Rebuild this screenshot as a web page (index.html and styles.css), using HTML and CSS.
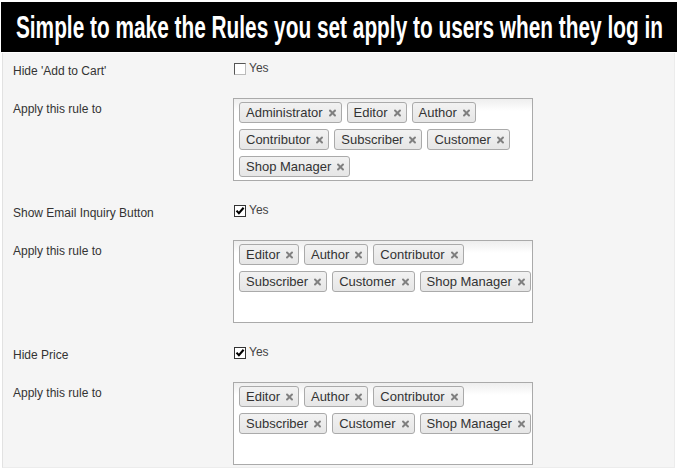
FILE: index.html
```html
<!DOCTYPE html>
<html>
<head>
<meta charset="utf-8">
<link rel="stylesheet" href="styles.css">
</head>
<body>
<header class="banner"><h1><span>Simple to make the Rules you set apply to users when they log in</span></h1></header>
<main class="panel">
  <section class="rule">
    <div class="label">Hide 'Add to Cart'</div>
    <label class="check"><span class="cb"></span>Yes</label>
    <div class="label apply">Apply this rule to</div>
    <div class="chooser">
      <div class="tag-row">
        <span class="tag">Administrator<i class="x"></i></span>
        <span class="tag">Editor<i class="x"></i></span>
        <span class="tag">Author<i class="x"></i></span>
      </div>
      <div class="tag-row">
        <span class="tag">Contributor<i class="x"></i></span>
        <span class="tag">Subscriber<i class="x"></i></span>
        <span class="tag">Customer<i class="x"></i></span>
      </div>
      <div class="tag-row">
        <span class="tag">Shop Manager<i class="x"></i></span>
      </div>
    </div>
  </section>
  <section class="rule">
    <div class="label">Show Email Inquiry Button</div>
    <label class="check"><span class="cb checked"><svg viewBox="0 0 10 10"><path d="M1.5 4.6 L3.9 7.2 L8.6 1.8" fill="none" stroke="#000" stroke-width="2.1"/></svg></span>Yes</label>
    <div class="label apply">Apply this rule to</div>
    <div class="chooser">
      <div class="tag-row">
        <span class="tag">Editor<i class="x"></i></span>
        <span class="tag">Author<i class="x"></i></span>
        <span class="tag">Contributor<i class="x"></i></span>
      </div>
      <div class="tag-row">
        <span class="tag">Subscriber<i class="x"></i></span>
        <span class="tag">Customer<i class="x"></i></span>
        <span class="tag">Shop Manager<i class="x"></i></span>
      </div>
    </div>
  </section>
  <section class="rule">
    <div class="label">Hide Price</div>
    <label class="check"><span class="cb checked"><svg viewBox="0 0 10 10"><path d="M1.5 4.6 L3.9 7.2 L8.6 1.8" fill="none" stroke="#000" stroke-width="2.1"/></svg></span>Yes</label>
    <div class="label apply">Apply this rule to</div>
    <div class="chooser">
      <div class="tag-row">
        <span class="tag">Editor<i class="x"></i></span>
        <span class="tag">Author<i class="x"></i></span>
        <span class="tag">Contributor<i class="x"></i></span>
      </div>
      <div class="tag-row">
        <span class="tag">Subscriber<i class="x"></i></span>
        <span class="tag">Customer<i class="x"></i></span>
        <span class="tag">Shop Manager<i class="x"></i></span>
      </div>
    </div>
  </section>
</main>
</body>
</html>
```
FILE: styles.css
```css
html, body {
  margin: 0;
  padding: 0;
  background: #ffffff;
}
body {
  font-family: "Liberation Sans", Arial, sans-serif;
  color: #333;
  overflow: hidden;
}
.banner {
  margin: 2px 3px 0 1px;
  height: 50px;
  background: #000;
  display: flex;
  align-items: center;
  justify-content: center;
  overflow: hidden;
}
.banner h1 {
  flex-shrink: 0;
  margin: 0;
  font-family: "Liberation Sans", sans-serif;
  font-weight: bold;
  font-size: 31px;
  line-height: 1;
  color: #fff;
  white-space: nowrap;
}
.banner h1 span {
  display: inline-block;
  transform: scaleX(0.672);
}
.panel {
  margin: 1px 5px 0 2px;
  padding: 7px 0 2px 10px;
  background: #f5f5f5;
  border-left: 1px solid #e2e2e2;
  border-right: 1px solid #ececec;
  border-bottom: 1px solid #ececec;
}
.rule {
  display: grid;
  grid-template-columns: 220px 300px;
  grid-template-rows: 38px 83px;
  margin-bottom: 21px;
}
.rule:last-child {
  margin-bottom: 0;
}
.label {
  font-size: 12px;
  line-height: 15px;
  padding-top: 4px;
}
.check {
  display: flex;
  align-items: center;
  height: 15px;
  margin-top: 1px;
  font-size: 12px;
  line-height: 15px;
  color: #444;
}
.cb {
  box-sizing: border-box;
  width: 12px;
  height: 12px;
  margin-left: 1px;
  margin-right: 3px;
  background: #fff;
  border: 1px solid;
  border-color: #555 #bbb #bbb #555;
  display: flex;
  align-items: center;
  justify-content: center;
}
.cb.checked {
  border-color: #333;
}
.cb svg {
  width: 10px;
  height: 10px;
}
.chooser {
  box-sizing: border-box;
  height: 83px;
  border: 1px solid #aaa;
  background: linear-gradient(to bottom, #eee 0%, #fff 15%);
  padding: 3px 0 0 5px;
  display: flex;
  flex-direction: column;
  gap: 6px;
}
.tag-row {
  display: flex;
  gap: 5px;
}
.tag {
  display: inline-flex;
  align-items: center;
  height: 21px;
  box-sizing: border-box;
  border: 1px solid #aaa;
  border-radius: 3px;
  background: linear-gradient(to bottom, #f2f2f2 0%, #e6e6e6 100%);
  padding: 0 4px 0 6px;
  font-size: 13px;
  line-height: 19px;
  color: #333;
  white-space: nowrap;
}
.x {
  width: 9px;
  height: 9px;
  margin-left: 5px;
  position: relative;
}
.x::before, .x::after {
  content: "";
  position: absolute;
  left: 0;
  top: 3.5px;
  width: 9px;
  height: 2px;
  background: #808080;
  border-radius: 1px;
}
.x::before { transform: rotate(45deg); }
.x::after { transform: rotate(-45deg); }
```
